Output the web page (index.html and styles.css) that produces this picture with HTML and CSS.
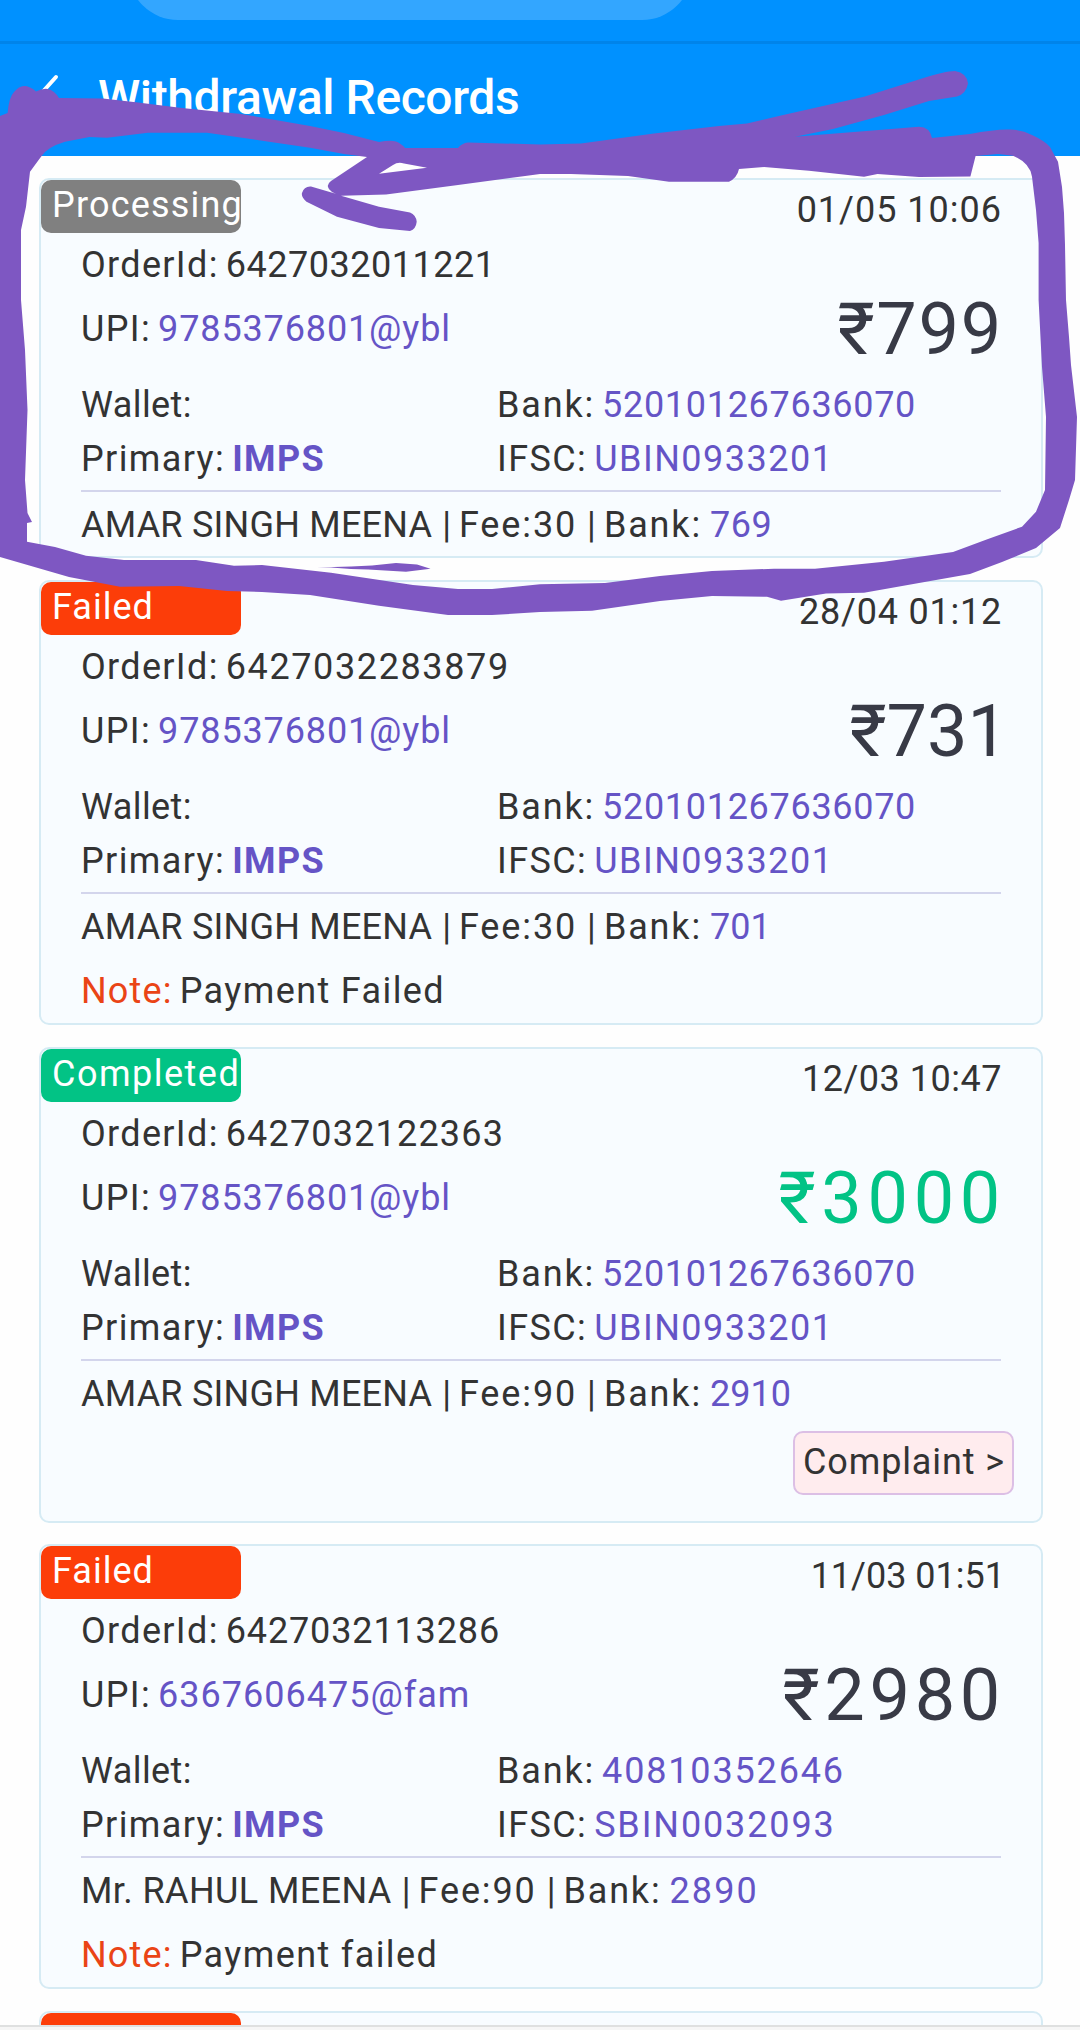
FILE: index.html
```html
<!DOCTYPE html>
<html lang="en">
<head>
<meta charset="utf-8">
<title>Withdrawal Records</title>
<link rel="stylesheet" href="styles.css">
</head>
<body>
<div class="screen">
  <div class="browser-bar"><div class="address"></div></div>
  <header class="header">
    <svg class="back" width="30" height="50" viewBox="0 0 30 50"><path d="M22 4 L4 24 L22 44" fill="none" stroke="#fff" stroke-width="4" stroke-linecap="round" stroke-linejoin="round"/></svg>
    <h1 class="title">Withdrawal Records</h1>
  </header>

  <main class="records">
    <section class="card">
      <div class="head"><span class="badge processing t12">Processing</span><time class="date t10">01/05 10:06</time></div>
      <div class="main">
        <div class="ids">
          <div class="row"><span class="t13">OrderId:</span> <span class="t05">6427032011221</span></div>
          <div class="row"><span class="t14">UPI:</span> <span class="value t09">9785376801@ybl</span></div>
        </div>
        <div class="amount a799">₹799</div>
      </div>
      <div class="info">
        <div class="row"><span class="t04">Wallet:</span></div>
        <div class="row"><span class="t18">Bank:</span> <span class="value t07">520101267636070</span></div>
        <div class="row"><span class="t14">Primary:</span> <b class="value t14">IMPS</b></div>
        <div class="row"><span class="t14">IFSC:</span> <span class="value t15">UBIN0933201</span></div>
      </div>
      <div class="row payee"><span class="t02">AMAR SINGH MEENA</span> <span class="bar">|</span> <span class="t19">Fee:30</span> <span class="bar">|</span> <span class="t18">Bank:</span> <span class="value t05">769</span></div>
    </section>

    <section class="card">
      <div class="head"><span class="badge failed t10">Failed</span><time class="date t08">28/04 01:12</time></div>
      <div class="main">
        <div class="ids">
          <div class="row"><span class="t13">OrderId:</span> <span class="t16">6427032283879</span></div>
          <div class="row"><span class="t14">UPI:</span> <span class="value t09">9785376801@ybl</span></div>
        </div>
        <div class="amount a731">₹731</div>
      </div>
      <div class="info">
        <div class="row"><span class="t04">Wallet:</span></div>
        <div class="row"><span class="t18">Bank:</span> <span class="value t07">520101267636070</span></div>
        <div class="row"><span class="t14">Primary:</span> <b class="value t14">IMPS</b></div>
        <div class="row"><span class="t14">IFSC:</span> <span class="value t15">UBIN0933201</span></div>
      </div>
      <div class="row payee"><span class="t02">AMAR SINGH MEENA</span> <span class="bar">|</span> <span class="t19">Fee:30</span> <span class="bar">|</span> <span class="t18">Bank:</span> <span class="value">701</span></div>
      <div class="row note"><span class="note-label t12">Note:</span> <span class="t14">Payment Failed</span></div>
    </section>

    <section class="card">
      <div class="head"><span class="badge completed t15">Completed</span><time class="date t05">12/03 10:47</time></div>
      <div class="main">
        <div class="ids">
          <div class="row"><span class="t13">OrderId:</span> <span class="t12">6427032122363</span></div>
          <div class="row"><span class="t14">UPI:</span> <span class="value t09">9785376801@ybl</span></div>
        </div>
        <div class="amount paid a3000">₹3000</div>
      </div>
      <div class="info">
        <div class="row"><span class="t04">Wallet:</span></div>
        <div class="row"><span class="t18">Bank:</span> <span class="value t07">520101267636070</span></div>
        <div class="row"><span class="t14">Primary:</span> <b class="value t14">IMPS</b></div>
        <div class="row"><span class="t14">IFSC:</span> <span class="value t15">UBIN0933201</span></div>
      </div>
      <div class="row payee"><span class="t02">AMAR SINGH MEENA</span> <span class="bar">|</span> <span class="t19">Fee:90</span> <span class="bar">|</span> <span class="t18">Bank:</span> <span class="value">2910</span></div>
      <div class="actions"><a class="complaint t09">Complaint &gt;</a></div>
    </section>

    <section class="card">
      <div class="head"><span class="badge failed t10">Failed</span><time class="date date-narrow">11/03 01:51</time></div>
      <div class="main">
        <div class="ids">
          <div class="row"><span class="t13">OrderId:</span> <span class="t09">6427032113286</span></div>
          <div class="row"><span class="t14">UPI:</span> <span class="value t10">6367606475@fam</span></div>
        </div>
        <div class="amount a2980">₹2980</div>
      </div>
      <div class="info">
        <div class="row"><span class="t04">Wallet:</span></div>
        <div class="row"><span class="t18">Bank:</span> <span class="value t18">40810352646</span></div>
        <div class="row"><span class="t14">Primary:</span> <b class="value t14">IMPS</b></div>
        <div class="row"><span class="t14">IFSC:</span> <span class="value t19">SBIN0032093</span></div>
      </div>
      <div class="row payee"><span class="t04">Mr. RAHUL MEENA</span> <span class="bar">|</span> <span class="t19">Fee:90</span> <span class="bar">|</span> <span class="t18">Bank:</span> <span class="value t21">2890</span></div>
      <div class="row note"><span class="note-label t12">Note:</span> <span class="t14">Payment failed</span></div>
    </section>

    <section class="card">
      <div class="head"><span class="badge failed t10"></span></div>
    </section>
  </main>
  <footer class="bottom-edge"></footer>

  <svg class="marker" width="1080" height="640" viewBox="0 0 1080 640">
    <path fill="#7e57c2" fill-rule="evenodd" d="
      M0 116 L7.6 113 Q9 97 14 92 Q19 86 24 86 Q30 86 36 91.5 Q43 88 48 89 Q55 91 59 98 L103 98.5 L138 102.5 L182 108 L241 114 L310 126 L344 133 L379 142 Q390 140 396 141.5 Q402 144 405 148 L458 148 Q462 143 468 142.5 L540 144.5 L581 143.5 L654 133.500 L719 126 L747 123.500 L781 115.500 L864 96.700 L922 78.500 Q945 71 955 71 Q967 73 968 83.500 Q966 94 957 96.500 L929 101 L884 115 L833 129 L795 136.700 L919 126.700 Q930 127 932 138 L970 134 Q995 129 1010 129.500 Q1022 130 1032 135 Q1045 141 1050 147 L1058 161.700 L1062 187 L1064 213 L1065 245 L1066 300 L1069 337 L1071 365 L1077 417 L1075 480 L1069 500 L1060 528 L1036 548 L1002 562 L970 574 L919 583 L864 592.700 L826 593.500 L781 600.700 L767 596.700 L712 596 L660 601 L592 610.700 L540 612 L492 615 L448 615 L379 605.700 L310 595 L262 592 L227 591 L179 586 L120 586.700 L69 577 L0 557 Z
      M27 541.700 L55 547 L86 555.700 L124 560 L196 560 L234 565.700 L262 565 L331 572.700 L413 585 L458 589 L492 589 L540 584.300 L605 583 L660 576 L712 571 L774 568.700 L815 568.700 L884 561.700 L953 552 L988 539 L1022 526.700 L1036 511.700 L1045 490 L1046 417 L1042 367 L1038.600 300 L1038.600 243 L1036 210 L1032 176.700 Q1030 163 1013 155.700 L998 154 L975.600 156 L970.400 176.500 L919 177 L877.500 174 L864 176.700 L809 170.700 L764 167 L739 169 Q737 178 729 181.700 L669 181.700 L628 176 L571 174 L540 174 L527 175.700 L458 185 L386 194.500 L341 195.700 L379 206.700 L410 212.500 Q416 215 416.700 221.700 Q416 229 410 231 L379 228 L337 216.700 L306.500 201.700 Q301 197 302 193 Q304 186 311 186.500 L340 195 Q329 192 328 187 Q327 184 331 181 L367 157 L344 154 L310 147.700 L269 141.700 L207 132.700 L148 132.700 L107 137.700 L89.500 137 L65 141.700 Q47 147 41 156.700 L30 171.700 L26 206.700 L21 230 L21 300 L25 350 L27.500 410 L25 480 L27.500 513 L32 522 L27 523 Z
      M379 173.700 L393 165 Q398 161.500 404 163.500 L427 167.700 Z"/>
    <path fill="#7e57c2" d="M317 567.500 L351 566.500 L372 565.500 L396 563 L417 564.500 L430.500 568.700 L406 571.700 L368 569.500 L351 569 L331 567.500 Z"/>
  </svg>
</div>
</body>
</html>
```
FILE: styles.css
```css
* { box-sizing: border-box; }

body {
  margin: 0;
  background: #fefefe;
  color: #333;
  font-family: Roboto, "Liberation Sans", sans-serif;
  font-size: 36px;
}

.screen {
  position: relative;
  display: flex;
  flex-direction: column;
  width: 1080px;
  height: 2030px;
  overflow: hidden;
}

.browser-bar {
  flex: none;
  display: flex;
  align-items: flex-end;
  height: 44px;
  padding: 0 388px 21px 128px;
  background: #0091ff;
  border-bottom: 3px solid #0084ea;
}
.address {
  flex: 1;
  height: 100px;
  background: #33a6ff;
  border-radius: 50px;
}

.header {
  flex: none;
  display: flex;
  align-items: center;
  gap: 34px;
  height: 112px;
  padding: 0 0 6px 34px;
  background: #0091ff;
}
.back { flex: none; margin-bottom: -2px; }
.title {
  margin: 0;
  color: #fff;
  font-size: 48px;
  font-weight: 500;
  letter-spacing: -0.39px;
  white-space: nowrap;
}

.records {
  flex: none;
  display: flex;
  flex-direction: column;
  gap: 21.8px;
  height: 1869px;
  padding: 22px 37px 0 39px;
  overflow: hidden;
}
.card {
  flex: none;
  padding-bottom: 4px;
  background: #f8fcff;
  border: 2px solid #d6ebf4;
  border-radius: 10px;
}

.head {
  display: flex;
  justify-content: space-between;
  height: 58px;
  padding-right: 40px;
}
.badge {
  width: 200px;
  height: 53px;
  padding-left: 11px;
  border-radius: 10px;
  color: #fff;
  line-height: 51px;
  white-space: nowrap;
}
.processing { background: #808080; }
.failed { background: #fc3d09; }
.completed { background: #02c385; }
.date {
  margin-right: -1px;
  line-height: 61px;
  white-space: nowrap;
}
.date-narrow { margin-right: -4px; letter-spacing: 0; }

.main {
  display: flex;
  justify-content: space-between;
  height: 140px;
  padding: 0 40px;
}
.ids { display: flex; flex-direction: column; gap: 10px; }
.row {
  display: flex;
  gap: 7px;
  line-height: 54px;
  white-space: nowrap;
}
.value { color: #6554c6; }

.amount {
  padding-top: 50px;
  color: #383a46;
  font-size: 72px;
  line-height: 84px;
}
.paid { color: #02c385; }
.a799 { margin-right: -2px; letter-spacing: 1.75px; }
.a731 { margin-right: -7px; letter-spacing: 0; }
.a3000 { margin-right: -5px; letter-spacing: 5.7px; }
.a2980 { margin-right: -4px; letter-spacing: 4.7px; }

.info {
  display: grid;
  grid-template-columns: 416px 1fr;
  margin: 0 40px;
  padding-bottom: 4px;
  border-bottom: 2px solid #d3d5ec;
}
.payee { gap: 8px; padding: 6px 40px 0; }
.bar { margin-left: 2px; }

.note { padding: 10px 40px 1px; }
.note-label { color: #ea4416; }

.actions {
  display: flex;
  justify-content: flex-end;
  padding: 10px 27px 22px 0;
}
.complaint {
  width: 221px;
  height: 64px;
  padding-left: 8px;
  background: #ffecee;
  border: 2px solid #dcbfe5;
  border-radius: 10px;
  line-height: 58px;
  white-space: nowrap;
}

.bottom-edge {
  flex: none;
  height: 5px;
  border-top: 2px solid #dfe0e0;
  background: #f6f6f6;
}

.marker {
  position: absolute;
  top: 0;
  left: 0;
}

/* Letter tracking steps */
.t02 { letter-spacing: 0.22px; }
.t04 { letter-spacing: 0.4px; }
.t05 { letter-spacing: 0.52px; }
.t07 { letter-spacing: 0.7px; }
.t08 { letter-spacing: 0.78px; }
.t09 { letter-spacing: 0.87px; }
.t10 { letter-spacing: 1px; }
.t12 { letter-spacing: 1.18px; }
.t13 { letter-spacing: 1.33px; }
.t14 { letter-spacing: 1.38px; }
.t15 { letter-spacing: 1.5px; }
.t16 { letter-spacing: 1.62px; }
.t18 { letter-spacing: 1.84px; }
.t19 { letter-spacing: 1.87px; }
.t21 { letter-spacing: 2.1px; }
```
